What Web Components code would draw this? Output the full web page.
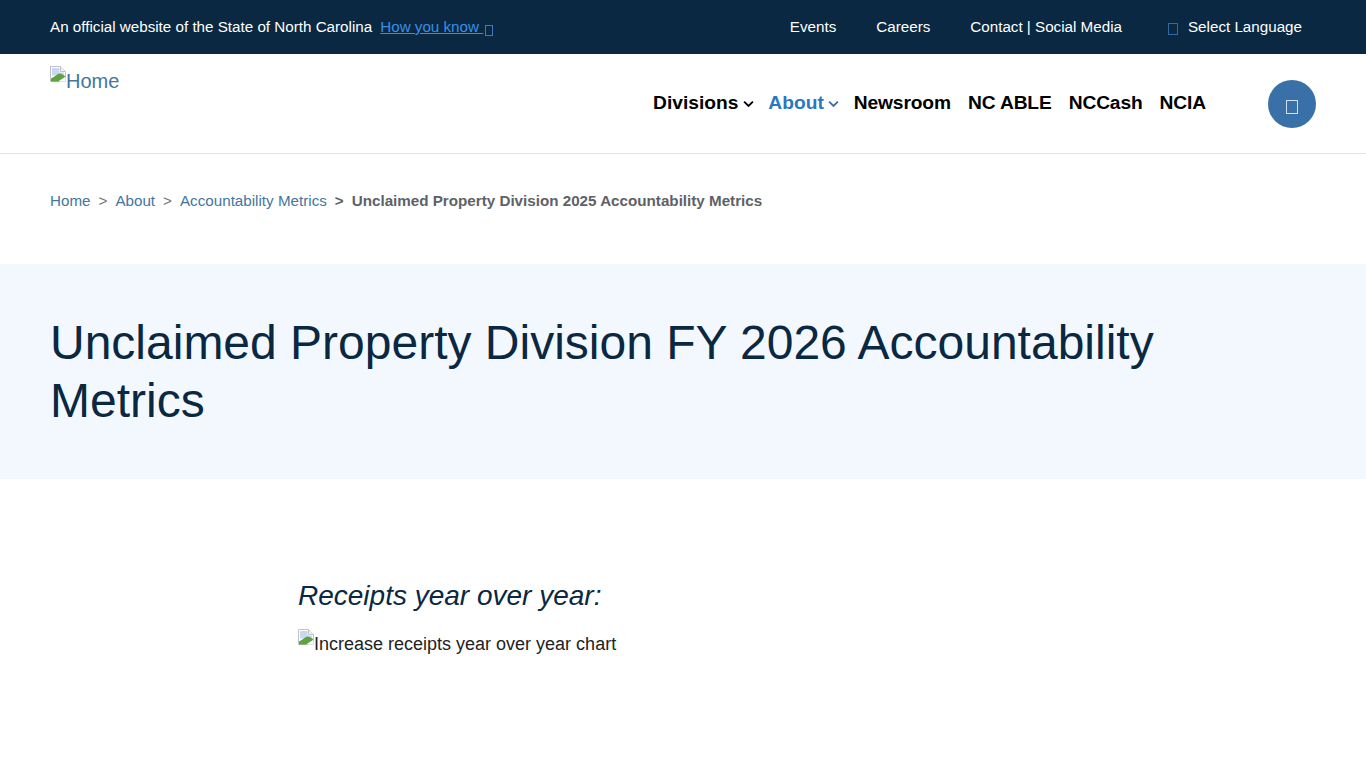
<!DOCTYPE html>
<html lang="en">
<head>
<meta charset="utf-8">
<title>Unclaimed Property Division FY 2026 Accountability Metrics</title>
<style>
  html, body { margin: 0; padding: 0; background: #fff; }
  body { font-family: "Liberation Sans", Arial, sans-serif; height: 768px; overflow: hidden; }
</style>
</head>
<body>
<nc-topbar>
  <span slot="notice">An official website of the State of North Carolina</span>
  <a slot="links">Events</a>
  <a slot="links">Careers</a>
  <a slot="links">Contact | Social Media</a>
</nc-topbar>
<nc-header></nc-header>
<nc-breadcrumb current="Unclaimed Property Division 2025 Accountability Metrics">
  <a>Home</a>
  <a>About</a>
  <a>Accountability Metrics</a>
</nc-breadcrumb>
<nc-hero>Unclaimed Property Division FY 2026 Accountability Metrics</nc-hero>
<nc-section heading="Receipts year over year:" alt="Increase receipts year over year chart"></nc-section>

<script>
(function () {
  // missing icon font glyph, shows as an empty box
  class NcTofu extends HTMLElement {
    connectedCallback() {
      if (this.shadowRoot) return;
      const root = this.attachShadow({ mode: "open" });
      root.innerHTML = `<style>
          :host { display: inline-block; width: 8px; height: 11px; box-sizing: border-box; border: 1px solid currentColor; white-space: normal; line-height: 0; }
        </style>`;
    }
  }

  // broken image placeholder with its alt text beside it
  class NcBrokenImg extends HTMLElement {
    connectedCallback() {
      if (this.shadowRoot) return;
      const root = this.attachShadow({ mode: "open" });
      root.innerHTML = `
        <style>
          :host { display: inline-block; }
          svg { display: inline-block; width: 16px; height: 16px; vertical-align: top; }
        </style>
        <svg viewBox="0 0 16 16" aria-hidden="true">
          <path d="M.5.5H10.5L15.5 5.5V15.5H.5Z" fill="#fff" stroke="#bfc3c8"/>
          <path d="M10.5.5V5.5H15.5" fill="#eef0f3" stroke="#bfc3c8"/>
          <path d="M2 2H9.5V6.5H14V9.5H2Z" fill="#c9d7f2"/>
          <path d="M1 15.5V12.5C4 11 7 8 9.5 7.5C11.5 7.5 13.5 9 15 10V11L8 15.5Z" fill="#5da33f"/>
          <path d="M9.5 15.5L15.5 11.5V15.5Z" fill="#fff"/>
        </svg><slot></slot>`;
    }
  }

  class NcTopbar extends HTMLElement {
    connectedCallback() {
      if (this.shadowRoot) return;
      const root = this.attachShadow({ mode: "open" });
      root.innerHTML = `
        <style>
          :host { display: flex; align-items: center; justify-content: space-between; height: 54px; padding: 0 64px 0 50px; background: #0a2842; color: #fff; font-size: 15.2px; line-height: 20px; }
          .left, .right { display: flex; align-items: center; height: 54px; }
          .how { margin-left: 8px; color: #3a8ee6; text-decoration: underline; white-space: pre; }
          .how nc-tofu { margin-left: 1.5px; vertical-align: -4px; color: #3a7cc4; }
          .right { gap: 40px; }
          ::slotted(a) { color: #fff; }
          .lang { margin-left: 6px; display: inline-flex; align-items: center; }
          .lang nc-tofu { color: #2c6aa8; width: 10px; height: 12px; margin-right: 10px; margin-top: 4px; }
        </style>
        <div class="left"><slot name="notice"></slot><a class="how">How you know <nc-tofu></nc-tofu></a></div>
        <div class="right"><slot name="links"></slot><span class="lang"><nc-tofu></nc-tofu>Select Language</span></div>`;
    }
  }

  class NcHeader extends HTMLElement {
    connectedCallback() {
      if (this.shadowRoot) return;
      const root = this.attachShadow({ mode: "open" });
      const chevron = `<svg viewBox="0 0 12 8" width="11" height="8" aria-hidden="true"><path d="M1.2 1.5 6 6.2l4.8-4.7" fill="none" stroke="currentColor" stroke-width="2"/></svg>`;
      root.innerHTML = `
        <style>
          :host { display: flex; justify-content: space-between; height: 99px; padding: 0 50px; border-bottom: 1px solid #e3e5e8; background: #fff; }
          .logo { margin-top: 12px; font-size: 20px; line-height: 30px; color: #44769e; height: 30px; }
          .right { display: flex; align-items: flex-start; }
          nav { display: flex; gap: 17px; margin-top: 36px; margin-right: 62px; font-size: 19.2px; font-weight: bold; line-height: 26px; color: #000; letter-spacing: -.12px; }
          nav a { display: inline-flex; align-items: center; gap: 5px; }
          nav a.drop { margin-right: -3px; letter-spacing: 0; }
          nav a.active { color: #2a77c2; gap: 4px; margin-right: -2px; }
          nav a.active svg { color: #3a70a8; }
          nav svg { margin-top: 2px; }
          .search { display: flex; align-items: center; justify-content: center; width: 48px; height: 48px; margin-top: 26px; border-radius: 50%; background: #3a70a8; color: #cfe0f5; }
          .search nc-tofu { width: 12px; height: 14px; margin-top: 5px; }
        </style>
        <nc-broken-img class="logo">Home</nc-broken-img>
        <div class="right">
          <nav>
            <a class="drop">Divisions ${chevron}</a>
            <a class="drop active">About ${chevron}</a>
            <a>Newsroom</a>
            <a>NC ABLE</a>
            <a>NCCash</a>
            <a>NCIA</a>
          </nav>
          <div class="search"><nc-tofu></nc-tofu></div>
        </div>`;
    }
  }

  class NcBreadcrumb extends HTMLElement {
    connectedCallback() {
      if (this.shadowRoot) return;
      const root = this.attachShadow({ mode: "open" });
      root.innerHTML = `
        <style>
          :host { display: block; height: 110px; padding: 37px 50px 0; box-sizing: border-box; font-size: 15.2px; line-height: 20px; color: #666; }
          ::slotted(a) { color: #44769e; }
          .row { display: flex; align-items: center; }
          .current { font-weight: bold; color: #5e6266; }
          .sep { margin: 0 8px; color: #777; }
          .sep.strong { font-weight: bold; color: #5e6266; }
        </style>
        <div class="row"></div>`;
      const row = root.querySelector(".row");
      const crumbs = [...this.querySelectorAll("a")];
      crumbs.forEach((a, i) => {
        const slot = document.createElement("slot");
        slot.name = "c" + i;
        a.slot = "c" + i;
        row.appendChild(slot);
        const sep = document.createElement("span");
        sep.className = i === crumbs.length - 1 ? "sep strong" : "sep";
        sep.textContent = ">";
        row.appendChild(sep);
      });
      const cur = document.createElement("span");
      cur.className = "current";
      cur.textContent = this.getAttribute("current");
      row.appendChild(cur);
    }
  }

  class NcHero extends HTMLElement {
    connectedCallback() {
      if (this.shadowRoot) return;
      const root = this.attachShadow({ mode: "open" });
      root.innerHTML = `
        <style>
          :host { display: block; height: 215px; box-sizing: border-box; padding: 50px 200px 0 50px; background: #f3f8fe; }
          h1 { margin: 0; font-size: 48px; font-weight: normal; line-height: 58px; color: #0a2842; }
        </style>
        <h1><slot></slot></h1>`;
    }
  }

  class NcSection extends HTMLElement {
    connectedCallback() {
      if (this.shadowRoot) return;
      const root = this.attachShadow({ mode: "open" });
      root.innerHTML = `
        <style>
          :host { display: block; padding: 100px 50px 0 298px; }
          h2 { margin: 0; font-size: 28px; font-style: italic; font-weight: normal; line-height: 34px; color: #0a2842; }
          nc-broken-img { display: block; margin-top: 16px; font-size: 18px; line-height: 30px; color: #222; }
        </style>
        <h2></h2>
        <nc-broken-img></nc-broken-img>`;
      root.querySelector("h2").textContent = this.getAttribute("heading");
      root.querySelector("nc-broken-img").textContent = this.getAttribute("alt");
    }
  }

  customElements.define("nc-tofu", NcTofu);
  customElements.define("nc-broken-img", NcBrokenImg);
  customElements.define("nc-topbar", NcTopbar);
  customElements.define("nc-header", NcHeader);
  customElements.define("nc-breadcrumb", NcBreadcrumb);
  customElements.define("nc-hero", NcHero);
  customElements.define("nc-section", NcSection);
})();
</script>
</body>
</html>
